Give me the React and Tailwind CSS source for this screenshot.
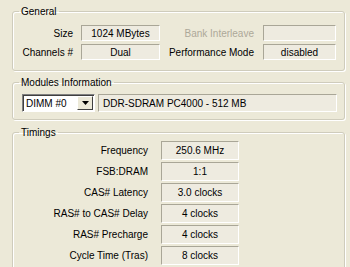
import React from "react";

const box =
  "h-[16px] flex items-center justify-center bg-[#EEEBE0] border-t border-l border-[#A9A697] border-b-white border-r-white border-b border-r";

const Field = ({ w, h = "h-[16px]", children }) => (
  <div
    className={`${w} ${h} flex items-center justify-center bg-[#EEEBE0] border border-t-[#A9A697] border-l-[#A9A697] border-b-white border-r-white`}
  >
    {children}
  </div>
);

const Group = ({ title, className = "", children }) => (
  <fieldset
    className={`w-[333px] border border-[#CFCCBC] rounded-[3px] shadow-[inset_1px_1px_0_#fff,1px_1px_0_#fff] ${className}`}
  >
    <legend className="ml-[6px] px-[2px] leading-[13px]">{title}</legend>
    {children}
  </fieldset>
);

const timings = [
  ["Frequency", "250.6 MHz"],
  ["FSB:DRAM", "1:1"],
  ["CAS# Latency", "3.0 clocks"],
  ["RAS# to CAS# Delay", "4 clocks"],
  ["RAS# Precharge", "4 clocks"],
  ["Cycle Time (Tras)", "8 clocks"],
];

export default function App() {
  return (
    <div
      className="w-[350px] h-[267px] overflow-hidden bg-[#ECE9D8] pl-[12px] pt-[5px] text-[10px] text-black"
      style={{ fontFamily: '"Liberation Sans", Arial, sans-serif' }}
    >
      <Group title="General" className="pt-[7px] pb-[10px]">
        <div className="flex flex-col gap-[3px]">
          <div className="flex items-center">
            <div className="w-[60px] text-right">Size</div>
            <div className="ml-[8px]">
              <Field w="w-[79px]">1024 MBytes</Field>
            </div>
            <div className="w-[94px] text-right text-[#ACA899]">Bank Interleave</div>
            <div className="ml-[9px]">
              <Field w="w-[73px]" />
            </div>
          </div>
          <div className="flex items-center">
            <div className="w-[60px] text-right">Channels #</div>
            <div className="ml-[8px]">
              <Field w="w-[79px]">Dual</Field>
            </div>
            <div className="w-[94px] text-right">Performance Mode</div>
            <div className="ml-[9px]">
              <Field w="w-[73px]">disabled</Field>
            </div>
          </div>
        </div>
      </Group>

      <Group title="Modules Information" className="mt-[5px] pt-[5px] pb-[7px]">
        <div className="flex items-center pl-[9px]">
          <div className="w-[73px] h-[18px] flex items-center bg-white border border-t-[#808080] border-l-[#808080] border-b-white border-r-white shadow-[inset_1px_1px_0_#404040]">
            <span className="flex-1 pl-[3px] pt-[1px]">DIMM #0</span>
            <div className="w-[16px] h-[14px] mr-[1px] flex items-center justify-center bg-[#ECE9D8] border border-t-white border-l-white border-b-[#404040] border-r-[#404040]">
              <svg width="7" height="4" viewBox="0 0 7 4">
                <path d="M0 0h7L3.5 4z" fill="#000" />
              </svg>
            </div>
          </div>
          <div className="ml-[3px]">
            <div className="w-[239px] h-[18px] flex items-center pl-[4px] bg-[#EEEBE0] border border-t-[#A9A697] border-l-[#A9A697] border-b-white border-r-white">
              DDR-SDRAM PC4000 - 512 MB
            </div>
          </div>
        </div>
      </Group>

      <Group title="Timings" className="mt-[6px] pt-[2px] pb-[10px]">
        <div className="flex flex-col gap-[2px]">
          {timings.map(([label, value]) => (
            <div key={label} className="flex items-center">
              <div className="w-[135px] text-right">{label}</div>
              <div className="ml-[13px]">
                <Field w="w-[78px]" h="h-[19px]">
                  {value}
                </Field>
              </div>
            </div>
          ))}
        </div>
      </Group>
    </div>
  );
}
